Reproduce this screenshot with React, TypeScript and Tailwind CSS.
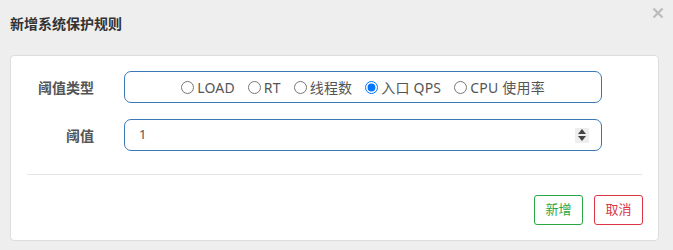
import React from "react";

const font = { fontFamily: '"Noto Sans", "Noto Sans CJK SC", sans-serif' };

const options = ["LOAD", "RT", "线程数", "入口 QPS", "CPU 使用率"];

const App: React.FC = () => {
  return (
    <div className="w-[673px] h-[250px] bg-[#eeeeee] relative overflow-hidden" style={font}>
      <div className="h-[55px] pl-[10px] pt-[13px]">
        <h4 className="text-[14px] font-bold text-[#333]">新增系统保护规则</h4>
      </div>
      <button className="absolute left-[652px] top-[7px] w-[12px] h-[12px]" aria-label="关闭">
        <svg width="12" height="12" viewBox="0 0 12 12">
          <path d="M1.5 1.5L10.5 10.5M10.5 1.5L1.5 10.5" stroke="#bdbdbd" strokeWidth="2.4" />
        </svg>
      </button>
      <div className="ml-[10px] w-[649px] bg-white border border-[#dddddd] rounded-[4px] pt-[15px] pb-[15px]">
        <div className="flex items-center">
          <label className="w-[83px] text-right text-[14px] font-bold text-[#555]">阈值类型</label>
          <div className="ml-[30px] w-[478px] h-[32px] border border-[#3a78b8] rounded-[7px] flex items-center justify-center gap-[13px] text-[14px] text-[#555]">
            {options.map((o, i) => (
              <label key={o} className="flex items-center gap-[3px]">
                <input type="radio" name="grade" defaultChecked={i === 3} className="w-[13px] h-[13px] m-0" />
                <span className="tracking-[0.2px]">{o}</span>
              </label>
            ))}
          </div>
        </div>
        <div className="flex items-center mt-[16px]">
          <label className="w-[83px] text-right text-[14px] font-bold text-[#555]">阈值</label>
          <div className="ml-[30px] w-[478px] h-[32px] border border-[#3a78b8] rounded-[7px] flex items-center pl-[14px] pr-[12px] text-[13px] text-[#555]">
            <span className="flex-1">1</span>
            <div className="w-[14px] h-[15px] bg-[#eeeeee] flex flex-col items-center justify-center gap-[2px]">
              <svg width="8" height="5" viewBox="0 0 8 5"><path d="M4 0L8 5H0z" fill="#444" /></svg>
              <svg width="8" height="5" viewBox="0 0 8 5"><path d="M0 0H8L4 5z" fill="#444" /></svg>
            </div>
          </div>
        </div>
        <div className="mx-[16px] mt-[23px] border-t border-[#e5e5e5]" />
        <div className="flex justify-end gap-[11px] mr-[15px] mt-[20px]">
          <button className="w-[49px] h-[30px] border border-[#28a745] rounded-[3px] text-[13px] text-[#28a745]">新增</button>
          <button className="w-[49px] h-[30px] border border-[#dc3545] rounded-[3px] text-[13px] text-[#dc3545]">取消</button>
        </div>
      </div>
    </div>
  );
};

export default App;
